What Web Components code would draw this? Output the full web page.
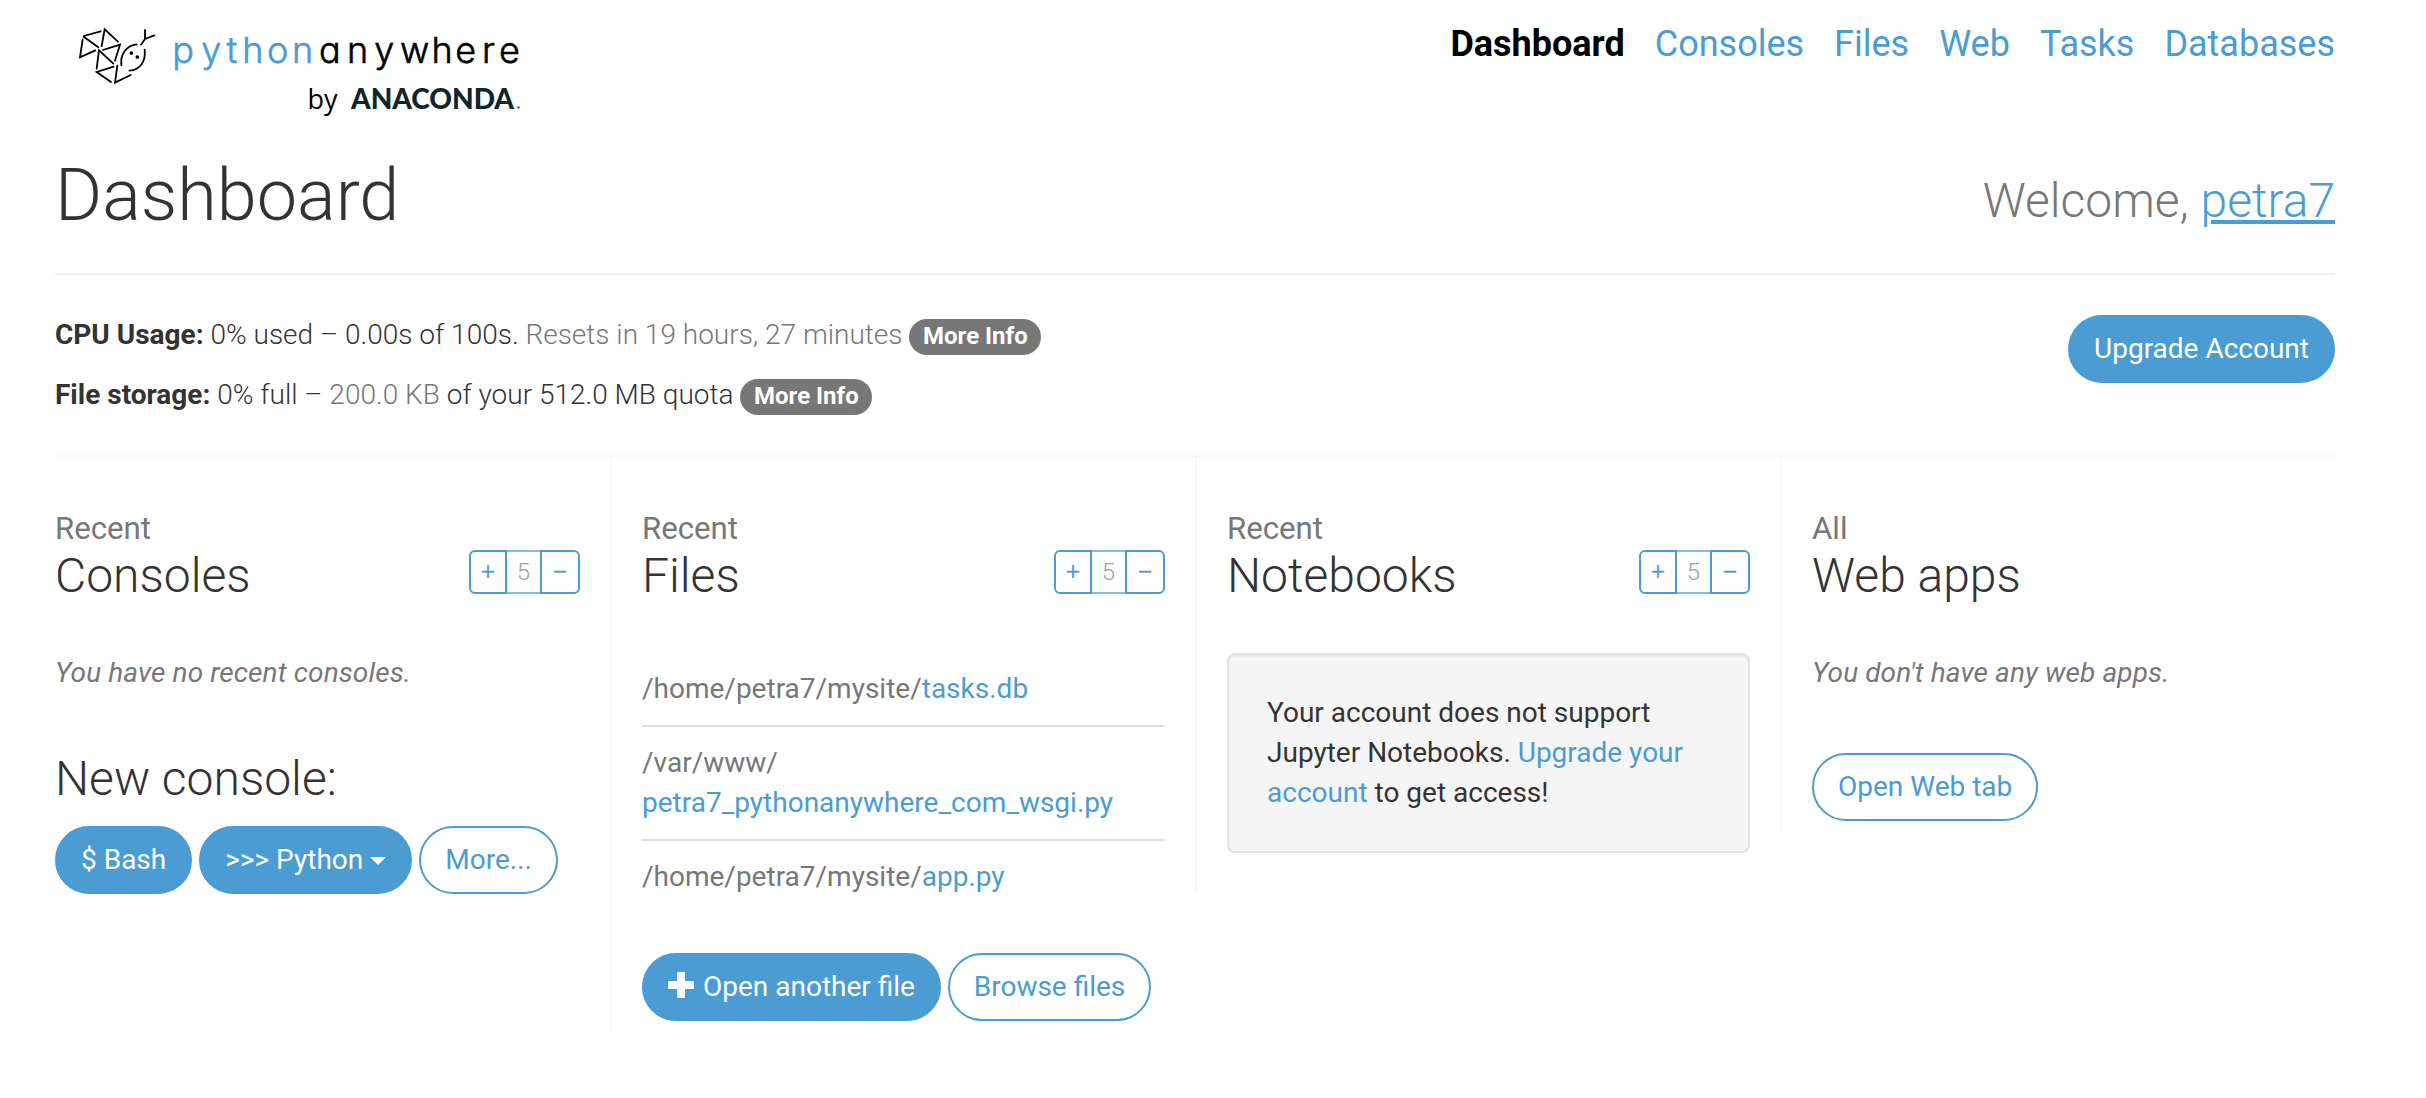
<!DOCTYPE html>
<html lang="en">
<head>
<meta charset="utf-8">
<title>Dashboard: PythonAnywhere</title>
<style>
html,body{margin:0;background:#fff}
body{font:400 28px/40px Roboto,"Liberation Sans",sans-serif;color:#333;height:1098px;overflow:hidden;-webkit-font-smoothing:antialiased}
</style>
</head>
<body>
<pa-dashboard></pa-dashboard>
<script>
function define(name, html) {
  const template = document.createElement('template');
  template.innerHTML = html;
  customElements.define(name, class extends HTMLElement {
    constructor() {
      super();
      this.attachShadow({mode: 'open'}).appendChild(template.content.cloneNode(true));
    }
  });
}

define('pa-logo', `
<style>:host{display:block;width:480px;height:110px}svg{display:block}.word{font:300 36px Inter,sans-serif;font-feature-settings:"cv11" 1}</style>
<svg width="480" height="110" viewBox="55 10 480 110">
  <g transform="translate(65 18) scale(.33333)" fill="none" stroke="#000" stroke-width="5.4" stroke-linecap="round">
    <path d="M56 54L107 40M53 64L45 118L91 97M56 56L100 88M110 84L119 34L159 71M114 96L165 80L150 128M95 152L102 97L145 137M146 146L95 162L138 192M157 143L150 194L197 171"/>
    <path d="M169 142C165 109 184 83 215 79M239 95C243 130 226 155 193 158M228 80L240 63V36M240 63L268 52"/>
    <circle cx="199" cy="105" r="5.5" fill="#000" stroke="none"/><circle cx="217" cy="117" r="5.5" fill="#000" stroke="none"/>
  </g>
  <text class="word" x="172.200 201.300 226.500 242.200 267 292" y="62.500" fill="#4a9cd3" stroke="#4a9cd3" stroke-width=".6">python</text>
  <text class="word" x="319 347 374.200 400 431.500 455.200 482 499" y="62.500" fill="#000" stroke="#000" stroke-width=".6">anywhere</text>
  <text x="351" y="109" font-family="Lato, sans-serif" font-size="28" font-weight="900" textLength="163" fill="#10252b">ANACONDA</text>
  <text x="307.500" y="109" font-family="Open Sans, sans-serif" font-size="27" textLength="30" fill="#000">by</text>
  <circle cx="518.500" cy="107.500" r="1.300" fill="#53676c"/>
</svg>`);

define('pa-nav', `
<style>
:host{display:flex;gap:30px;font-size:36px;line-height:40px}
a{color:#4a9cd3}a.active{color:#000;font-weight:700}
</style>
<a class="active">Dashboard</a><a>Consoles</a><a>Files</a><a>Web</a><a>Tasks</a><a>Databases</a>`);

define('pa-badge', `
<style>:host{display:inline-block;vertical-align:top;margin-top:5px;height:36px;padding:0 13.7px;border-radius:20px;background:#777;color:#fff;font-size:24px;line-height:35px;font-weight:700}</style>
<slot></slot>`);

define('pa-button', `
<style>
:host{display:inline-flex;box-sizing:border-box;align-items:center;height:68px;padding:0 24px;border:2px solid #4a9cd3;border-radius:34px;background:#4a9cd3;color:#fff;line-height:40px;white-space:nowrap}
:host([outline]){background:#fff;color:#4a9cd3}
</style>
<slot></slot>`);

define('pa-stepper', `
<style>
:host{display:flex;font-size:24px;line-height:36px;text-align:center}
span{box-sizing:border-box;height:44px;padding:2px 0;border:2px solid #4a9cd3;color:#4a9cd3}
.plus{width:38px;border-radius:6px 0 0 6px;-webkit-text-stroke:.5px #4a9cd3;z-index:1}
.count{width:37px;margin:0 -2px;opacity:.65;color:#6c6c6c}
.minus{width:40px;border-radius:0 6px 6px 0;-webkit-text-stroke:.5px #4a9cd3;z-index:1}
</style>
<span class="plus">+</span><span class="count">5</span><span class="minus">–</span>`);

define('pa-column', `
<style>
:host{display:block;box-sizing:border-box;width:585px;padding:53px 30px 0;border-left:2px solid #f8f8f8}
:host([first]){border-left-color:transparent;padding-left:28px}
.kicker{font-size:31.2px;line-height:38px;color:#777}
.head{display:flex;justify-content:space-between;align-items:flex-start;margin-top:2px;height:52px;font-size:48px;line-height:52px;font-weight:300}
.body{margin-top:51px}
</style>
<div class="kicker"><slot name="kicker"></slot></div>
<div class="head"><slot name="title"></slot><slot name="tools"></slot></div>
<div class="body"><slot></slot></div>`);

define('pa-file', `
<style>
:host{display:block;padding:16px 0;color:#777}
:host([line]){border-top:2px solid #ddd}
</style>
<slot></slot>`);

define('pa-well', `
<style>:host{display:block;box-sizing:border-box;height:200px;padding:38px;border:2px solid #e3e3e3;border-radius:8px;background:#f5f5f5;box-shadow:inset 0 2px 2px rgba(0,0,0,.05)}</style>
<slot></slot>`);

define('pa-dashboard', `
<style>
:host{display:block;width:2280px;margin-left:55px}
a{color:#4a9cd3}
header{display:flex;justify-content:space-between;height:155px}
pa-logo{margin-top:10px}
pa-nav{margin-top:24px}
.title{display:flex;justify-content:space-between;height:118px;border-bottom:2px solid #eee}
h1{margin:1px 0 0;font-size:72px;line-height:80px;font-weight:300}
.welcome{margin-top:20px;font-size:48px;line-height:52px;font-weight:300;color:#777}
.welcome a{text-decoration:underline;text-decoration-thickness:4px;text-underline-offset:3px}
.stats{display:flex;justify-content:space-between;align-items:flex-start;height:140px;padding-top:40px;font-weight:300;border-bottom:2px solid #f8f8f8}
.stats p{height:40px;margin:0 0 20px}
.stats b{font-weight:700}
.stats i{font-style:normal;color:#777}
.stats pa-badge{margin-top:4px}
.stats pa-button{font-weight:400}
.columns{display:flex;align-items:flex-start;margin:0 -30px}
.c2{height:574px}.c3{height:436px}.c4{height:374px}
em{display:block;color:#777;letter-spacing:.11px}
h3{margin:60px 0 21px;font-size:48px;line-height:52px;font-weight:300}
.row{display:flex;gap:7px}
.files{gap:6.8px;margin-top:40px}
.web{margin-top:60px}
.caret{width:0;height:0;margin:2px 0 0 7px;border:8px solid transparent;border-top-color:#fff;border-bottom:0}
.add{display:block;margin:-4px 9px 0 0}
</style>
<header><pa-logo></pa-logo><pa-nav></pa-nav></header>
<section class="title"><h1>Dashboard</h1><div class="welcome">Welcome, <a>petra7</a></div></section>
<section class="stats">
  <div>
    <p><b>CPU Usage:</b> 0% used – 0.00s of 100s. <i>Resets in 19 hours, 27 minutes</i> <pa-badge>More Info</pa-badge></p>
    <p><b>File storage:</b> 0% full – <i>200.0 KB</i> of your 512.0 MB quota <pa-badge>More Info</pa-badge></p>
  </div>
  <pa-button>Upgrade Account</pa-button>
</section>
<section class="columns">
  <pa-column first>
    <span slot="kicker">Recent</span><span slot="title">Consoles</span><pa-stepper slot="tools"></pa-stepper>
    <em>You have no recent consoles.</em>
    <h3>New console:</h3>
    <div class="row"><pa-button>$ Bash</pa-button><pa-button>&gt;&gt;&gt; Python<span class="caret"></span></pa-button><pa-button outline>More...</pa-button></div>
  </pa-column>
  <pa-column class="c2">
    <span slot="kicker">Recent</span><span slot="title">Files</span><pa-stepper slot="tools"></pa-stepper>
    <pa-file>/home/petra7/mysite/<a>tasks.db</a></pa-file>
    <pa-file line>/var/www/<br><a>petra7_pythonanywhere_com_wsgi.py</a></pa-file>
    <pa-file line>/home/petra7/mysite/<a>app.py</a></pa-file>
    <div class="row files"><pa-button><svg class="add" width="26" height="26" viewBox="0 0 26 26"><path fill="#fff" d="M10 0h6q1 0 1 1v8h8q1 0 1 1v6q0 1-1 1h-8v8q0 1-1 1h-6q-1 0-1-1v-8H1q-1 0-1-1v-6q0-1 1-1h8V1q0-1 1-1z"/></svg>Open another file</pa-button><pa-button outline>Browse files</pa-button></div>
  </pa-column>
  <pa-column class="c3">
    <span slot="kicker">Recent</span><span slot="title">Notebooks</span><pa-stepper slot="tools"></pa-stepper>
    <pa-well><div>Your account does not support</div><div>Jupyter Notebooks. <a>Upgrade your</a></div><div><a>account</a> to get access!</div></pa-well>
  </pa-column>
  <pa-column class="c4">
    <span slot="kicker">All</span><span slot="title">Web apps</span>
    <em>You don't have any web apps.</em>
    <div class="row web"><pa-button outline>Open Web tab</pa-button></div>
  </pa-column>
</section>`);
</script>
</body>
</html>
